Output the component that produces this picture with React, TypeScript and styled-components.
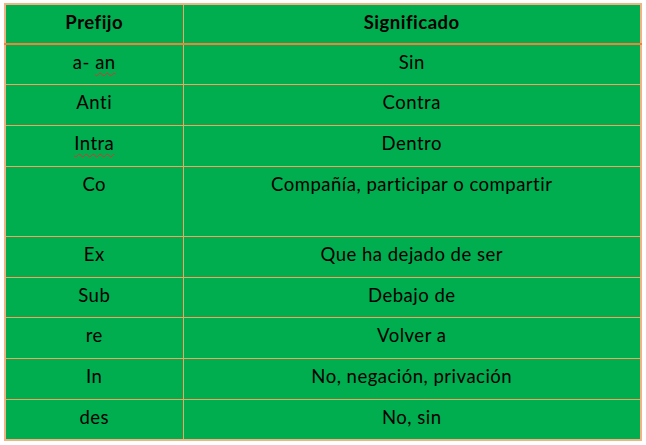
import * as React from "react";
import styled, { createGlobalStyle } from "styled-components";

const rows = [
  { prefix: "a- ", flagged: "an", meaning: "Sin" },
  { prefix: "Anti", meaning: "Contra" },
  { prefix: "", flagged: "Intra", meaning: "Dentro" },
  { prefix: "Co", meaning: "Compañía, participar o compartir", tall: true },
  { prefix: "Ex", meaning: "Que ha dejado de ser" },
  { prefix: "Sub", meaning: "Debajo de" },
  { prefix: "re", meaning: "Volver a" },
  { prefix: "In", meaning: "No, negación, privación" },
  { prefix: "des", meaning: "No, sin" },
];

const App = (): JSX.Element => {
  return (
    <>
      <GlobalStyle />
      <Page>
        <Table>
          <thead>
            <tr>
              <HeadCell>Prefijo</HeadCell>
              <HeadCell>Significado</HeadCell>
            </tr>
          </thead>
          <tbody>
            {rows.map((r, i) => (
              <Row key={i} tall={r.tall}>
                <Cell>
                  {r.prefix}
                  {r.flagged && <Flagged>{r.flagged}</Flagged>}
                </Cell>
                <Cell>{r.meaning}</Cell>
              </Row>
            ))}
          </tbody>
        </Table>
      </Page>
    </>
  );
};

export default App;

const GlobalStyle = createGlobalStyle`
  body {
    margin: 0;
    background: #ffffff;
    font-family: Lato, "Open Sans", "Liberation Sans", sans-serif;
  }
`;

const Page = styled.div`
  width: 646px;
  height: 445px;
  padding: 3px 0 0 4px;
  box-sizing: border-box;
`;

const Table = styled.table`
  width: 638px;
  border-collapse: collapse;
  background: #00ad4f;
  border: 2px solid #f4b183;
  color: #000;
  font-size: 18.5px;
  letter-spacing: 0.5px;
  font-variant-ligatures: none;
  table-layout: fixed;

  td:first-child,
  th:first-child {
    width: 178px;
  }
`;

const HeadCell = styled.th`
  height: 40px;
  padding: 0;
  font-weight: 700;
  vertical-align: top;
  padding-top: 6px;
  box-sizing: border-box;
  border-right: 1px solid #f4a460;
  border-bottom: 2px solid #f0823c;
  line-height: 22px;
`;

const Row = styled.tr<{ tall?: boolean }>`
  height: ${({ tall }) => (tall ? "70px" : "40.8px")};
`;

const Cell = styled.td`
  padding: 6px 0 0 0;
  text-align: center;
  vertical-align: top;
  border-right: 1px solid #f4a460;
  border-bottom: 1px solid #f4a460;
  line-height: 22px;
`;

const Flagged = styled.span`
  text-decoration: underline wavy #e03030;
  text-decoration-thickness: 1px;
  text-underline-offset: 3px;
`;
